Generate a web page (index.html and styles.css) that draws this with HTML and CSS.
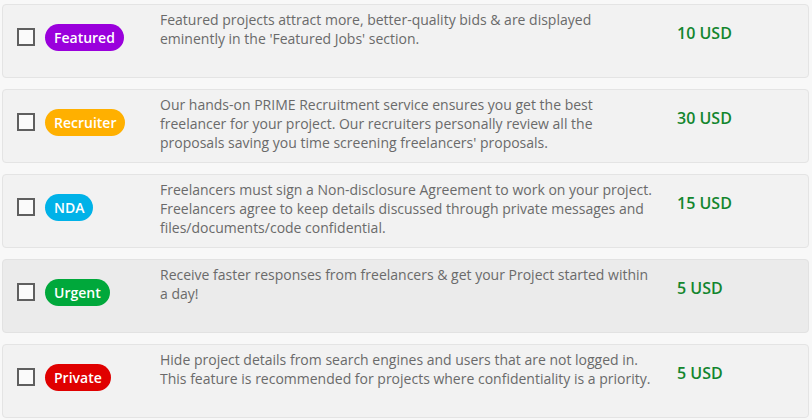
FILE: index.html
```html
<!DOCTYPE html>
<html lang="en">
<head>
<meta charset="utf-8">
<title>Upgrades</title>
<link rel="stylesheet" href="styles.css">
</head>
<body>
<div class="list">
  <div class="card">
    <span class="check"></span>
    <div class="badge-cell"><span class="badge featured">Featured</span></div>
    <p class="desc">Featured projects attract more, better-quality bids &amp; are displayed eminently in the 'Featured Jobs' section.</p>
    <div class="price">10 USD</div>
  </div>
  <div class="card">
    <span class="check"></span>
    <div class="badge-cell"><span class="badge recruiter">Recruiter</span></div>
    <p class="desc">Our hands-on PRIME Recruitment service ensures you get the best freelancer for your project. Our recruiters personally review all the proposals saving you time screening freelancers' proposals.</p>
    <div class="price">30 USD</div>
  </div>
  <div class="card">
    <span class="check"></span>
    <div class="badge-cell"><span class="badge nda">NDA</span></div>
    <p class="desc">Freelancers must sign a Non-disclosure Agreement to work on your project. Freelancers agree to keep details discussed through private messages and files/documents/code confidential.</p>
    <div class="price">15 USD</div>
  </div>
  <div class="card hover">
    <span class="check"></span>
    <div class="badge-cell"><span class="badge urgent">Urgent</span></div>
    <p class="desc">Receive faster responses from freelancers &amp; get your Project started within a day!</p>
    <div class="price">5 USD</div>
  </div>
  <div class="card">
    <span class="check"></span>
    <div class="badge-cell"><span class="badge private">Private</span></div>
    <p class="desc">Hide project details from search engines and users that are not logged in. This feature is recommended for projects where confidentiality is a priority.</p>
    <div class="price">5 USD</div>
  </div>
</div>
</body>
</html>
```
FILE: styles.css
```css
* { box-sizing: border-box; }
html, body {
  margin: 0;
  padding: 0;
  background: #f8f8f8;
  font-family: "Open Sans", "Liberation Sans", sans-serif;
}
.list {
  padding: 4px 3px 0 2px;
  display: flex;
  flex-direction: column;
  gap: 11px;
}
.card {
  height: 74px;
  background: #f2f2f2;
  border: 1px solid #e4e4e4;
  border-radius: 4px;
  padding: 5px 0 0 14px;
  display: grid;
  grid-template-columns: 18px 105px 495px auto;
  column-gap: 10px;
  align-items: start;
}
.card.hover {
  background: #ebebeb;
  border-color: #e2e2e2;
}
.check {
  margin-top: 18px;
  width: 18px;
  height: 18px;
  border: 2px solid #5f5f5f;
  background: #fafafa;
}
.badge-cell {
  margin-top: 14px;
}
.badge {
  display: inline-block;
  height: 27px;
  line-height: 27px;
  padding: 0 9px;
  border-radius: 14px;
  color: #fff;
  font-size: 14px;
  font-weight: 600;
}
.featured { background: #9a00dc; }
.recruiter { background: #ffb000; }
.nda { background: #00b2e8; }
.urgent { background: #00a83b; }
.private { background: #e00000; }
.desc {
  margin: 0;
  font-size: 14px;
  line-height: 19px;
  color: #6a6a6a;
}
.price {
  margin-top: 12px;
  margin-left: 12px;
  font-size: 16px;
  line-height: 22px;
  font-weight: 600;
  color: #13862e;
}
```
